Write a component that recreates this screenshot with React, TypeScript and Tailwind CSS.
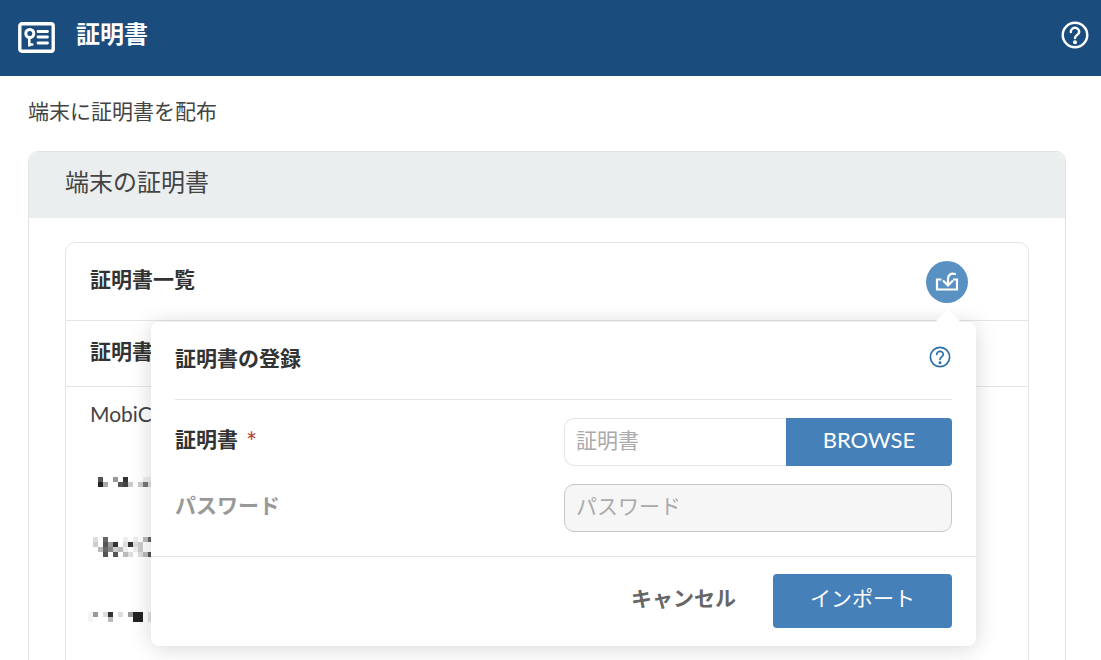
import React from 'react';

const FONT = 'font-["Lato","Noto_Sans_CJK_JP",sans-serif]';

// 個人情報のモザイク [x, y, 色]
const mosaicA: [number, number, string][] = [
  [0, 0, '#555'], [3, 0, '#999'], [5, 0, '#333'], [9, 0, '#eee'], [10, 0, '#eee'],
  [0, 1, '#222'], [1, 1, '#aaa'], [4, 1, '#555'], [5, 1, '#444'], [6, 1, '#ccc'], [8, 1, '#ccc'], [9, 1, '#777'], [10, 1, '#ddd'],
];
const mosaicB: [number, number, string][] = [
  [0, 0, '#ddd'], [2, 0, '#666'], [6, 0, '#eee'], [8, 0, '#eee'], [10, 0, '#bbb'], [11, 0, '#666'],
  [0, 1, '#ccc'], [2, 1, '#555'], [3, 1, '#999'], [4, 1, '#333'], [6, 1, '#ddd'], [7, 1, '#333'], [8, 1, '#ddd'], [9, 1, '#ccc'],
  [1, 2, '#bbb'], [2, 2, '#666'], [3, 2, '#888'], [4, 2, '#ccc'], [5, 2, '#bbb'], [6, 2, '#eee'], [8, 2, '#eee'], [9, 2, '#ccc'],
  [2, 3, '#555'], [4, 3, '#555'], [6, 3, '#bbb'], [7, 3, '#ddd'], [9, 3, '#ddd'], [10, 3, '#bbb'], [11, 3, '#555'],
];
const mosaicC: [number, number, string][] = [
  [0, 0, '#f3f3f3'], [1, 0, '#999'], [3, 0, '#ddd'], [4, 0, '#333'], [6, 0, '#ddd'], [8, 0, '#999'], [9, 0, '#222'], [10, 0, '#222'], [12, 0, '#e2e2e2'],
  [0, 1, '#f3f3f3'], [4, 1, '#bbb'], [9, 1, '#222'], [10, 1, '#222'], [12, 1, '#e2e2e2'],
];

const Mosaic: React.FC<{ cells: [number, number, string][]; className: string; rows: number }> = ({ cells, className, rows }) => (
  <svg width={70} height={rows * 5} className={className} shapeRendering="crispEdges">
    {cells.map(([x, y, c], i) => <rect key={i} x={x * 5} y={y * 5} width={5} height={5} fill={c} />)}
  </svg>
);

const HelpIcon: React.FC<{ size: number; color: string; sw: number }> = ({ size, color, sw }) => (
  <svg width={size} height={size} viewBox="0 0 24 24" fill="none" stroke={color} strokeWidth={sw} strokeLinecap="round" strokeLinejoin="round">
    <circle cx="12" cy="12" r="10.5" />
    <path d="M8.4 9.4a3.6 3.6 0 0 1 7.2 0c0 2.4-3.6 2.6-3.6 5.2" />
    <circle cx="12" cy="18.2" r="0.7" fill={color} />
  </svg>
);

const CertIcon = () => (
  <svg width={37} height={31} viewBox="0 0 37 31" fill="none" stroke="#fff" strokeLinecap="round">
    <rect x="1.8" y="1.8" width="33.4" height="27.4" rx="2" strokeWidth="3.4" />
    <circle cx="11.8" cy="11.5" r="4" strokeWidth="3" />
    <path d="M11.3 15.5V23.5M11.3 22.5h3" strokeWidth="2.6" />
    <path d="M20 9.5h9.5M20 15h9.5M20 21h9.5" strokeWidth="2.8" />
  </svg>
);

const ImportIcon = () => (
  <svg width={24} height={24} viewBox="0 0 24 24" fill="none" stroke="#fff" strokeWidth="2.2">
    <path d="M6.5 9.5H2v10h20v-10h-4" />
    <path d="M20 4c-4-1.2-7 .8-7 5v5.5" strokeLinecap="round" />
    <path d="M8 10.5l5 5 5-5" />
  </svg>
);

export default function App() {
  return (
    <div className={`relative h-[660px] w-[1101px] overflow-hidden bg-white text-[#333] ${FONT}`}>
      <header className="flex h-[76px] items-center bg-[#1b4c7e] pl-[18px] pr-[12px] text-white">
        <div className="-mt-[2px]"><CertIcon /></div>
        <h1 className="ml-[21px] -mt-[8px] text-[24px] leading-none font-bold">証明書</h1>
        <div className="ml-auto -mt-[6px]"><HelpIcon size={28} color="#fff" sw={2.1} /></div>
      </header>

      <main className="box-content w-[1066px] px-[28px]">
        <p className="mt-[23px] h-[24px] text-[21px] leading-[24px] text-[#444]">端末に証明書を配布</p>

        <section className="mt-[28px] h-[600px] w-[1038px] rounded-t-[10px] border border-[#e0e3e4]">
          <div className="flex h-[66px] items-center rounded-t-[10px] bg-[#ebeeef] pb-[6px] pl-[36px] text-[24px] text-[#444]">端末の証明書</div>
          <div className="mx-[36px] mt-[24px] h-[500px] w-[964px] rounded-t-[10px] border border-[#e3e5e6]">
            <div className="flex h-[78px] items-center border-b border-[#e3e5e6] pl-[24px] pr-[60px]">
              <span className="-mt-[5px] text-[21px] font-bold text-[#333]">証明書一覧</span>
              <button className="ml-auto mt-[1px] flex h-[42px] w-[42px] items-center justify-center rounded-full bg-[#5a91c3]"><ImportIcon /></button>
            </div>
            <div className="flex h-[66px] items-center border-b border-[#e3e5e6] pb-[6px] pl-[24px] text-[21px] font-bold">証明書</div>
            <div className="pl-[24px] pt-[14px] text-[21px] leading-[26px] text-[#444]">MobiC</div>
            <div className="flex flex-col items-start">
              <Mosaic cells={mosaicA} rows={2} className="ml-[32px] mt-[50px]" />
              <Mosaic cells={mosaicB} rows={4} className="ml-[27px] mt-[50px]" />
              <Mosaic cells={mosaicC} rows={2} className="ml-[22px] mt-[55px]" />
            </div>
          </div>
        </section>
      </main>

      {/* ポップオーバー */}
      <div className="absolute left-[151px] top-[322px] w-[825px] rounded-[8px] bg-white shadow-[0_2px_22px_rgba(0,0,0,0.16)]">
        <div className="absolute right-[19px] -top-[9px] h-[18px] w-[18px] rotate-45 bg-white" />
        <div className="relative px-[24px]">
          <div className="flex h-[78px] items-center justify-between border-b border-[#e3e5e6]">
            <span className="-mt-[6px] text-[21px] font-bold text-[#333]">証明書の登録</span>
            <div className="mr-[1px] -mt-[7px]"><HelpIcon size={22} color="#2a6fa8" sw={1.8} /></div>
          </div>
          <div className="mt-[18px] flex h-[48px] items-center">
            <label className="flex w-[389px] items-center text-[21px] font-bold text-[#333]">
              <span className="-mt-[6px]">証明書</span><span className="ml-[8px] text-[26px] leading-none font-normal text-[#b5442f]">*</span>
            </label>
            <div className="flex h-[48px] w-[388px]">
              <div className="flex w-[222px] items-center rounded-l-[10px] border border-r-0 border-[#e5e5e5] pb-[4px] pl-[11px] text-[21px] text-[#aaa]">証明書</div>
              <button className="w-[166px] rounded-r-[4px] bg-[#4580b8] pb-[5px] text-[22px] text-white">BROWSE</button>
            </div>
          </div>
          <div className="mt-[18px] flex h-[48px] items-center">
            <label className="-mt-[6px] w-[389px] text-[21px] font-bold text-[#999]">パスワード</label>
            <div className="flex h-[48px] w-[388px] items-center rounded-[10px] border border-[#c8c8c8] bg-[#f6f6f6] pb-[4px] pl-[11px] text-[21px] text-[#aaa]">パスワード</div>
          </div>
        </div>
        <div className="mt-[24px] flex h-[90px] items-start justify-end border-t border-[#e3e5e6] pr-[24px] pt-[17px]">
          <button className="mr-[37px] h-[54px] pb-[7px] text-[21px] font-bold text-[#666]">キャンセル</button>
          <button className="h-[54px] w-[179px] rounded-[4px] bg-[#4580b8] pb-[6px] text-[21px] text-white">インポート</button>
        </div>
      </div>
    </div>
  );
}
